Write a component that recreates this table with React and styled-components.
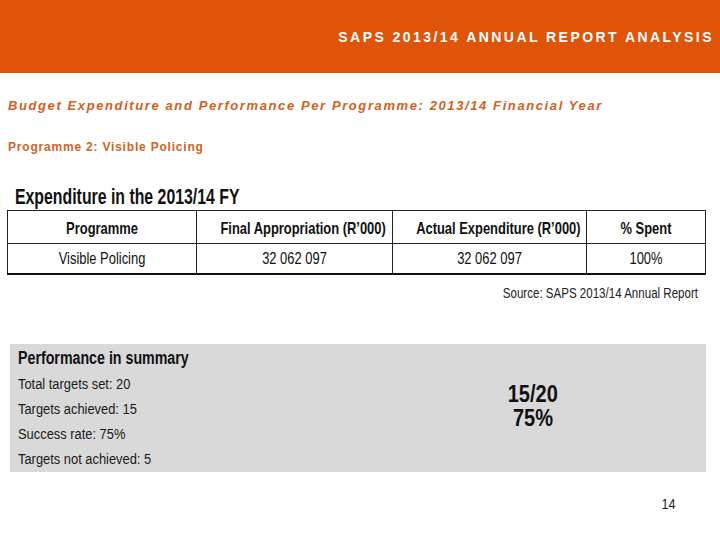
import React from "react";
import styled, { createGlobalStyle } from "styled-components";

const GlobalStyle = createGlobalStyle`
  html, body {
    margin: 0;
    padding: 0;
    background: #ffffff;
  }
  body {
    font-family: "Liberation Sans", Arial, sans-serif;
    width: 720px;
    height: 540px;
    overflow: hidden;
  }
`;

// the slide uses a condensed sans; squeeze Liberation Sans to get the same widths
const squeeze = (scale, origin) => `
  transform: scaleX(${scale});
  transform-origin: ${origin};
  white-space: nowrap;
`;

const Slide = styled.div`
  width: 720px;
  height: 540px;
  display: flex;
  flex-direction: column;
`;

const Banner = styled.header`
  height: 73px;
  background: #df5408;
  display: flex;
  justify-content: flex-end;
  align-items: center;
  padding-right: 6px;
  box-sizing: border-box;
`;

const BannerTitle = styled.h1`
  margin: 0;
  color: #ffffff;
  font-size: 14px;
  line-height: 16px;
  font-weight: bold;
  letter-spacing: 2.45px;
`;

const Content = styled.main`
  flex: 1;
  display: flex;
  flex-direction: column;
  padding: 0 14px 0 7px;
`;

const Heading = styled.h2`
  margin: 25px 0 0 1px;
  color: #d2601f;
  font-size: 13px;
  line-height: 16px;
  font-style: italic;
  font-weight: bold;
  letter-spacing: 1.6px;
`;

const SubHeading = styled.h3`
  margin: 26px 0 0 1px;
  color: #cf6428;
  font-size: 12px;
  line-height: 14px;
  font-weight: bold;
  letter-spacing: 0.8px;
`;

const TableTitle = styled.div`
  margin: 30px 0 0 8px;
  font-size: 22px;
  line-height: 26px;
  font-weight: bold;
  color: #111;
  ${squeeze(0.72, "left")}
`;

const Table = styled.table`
  width: 698px;
  table-layout: fixed;
  border-collapse: collapse;
  color: #111;
  border-bottom: 2px solid #111;
`;

const Th = styled.th`
  height: 29px;
  border: 1px solid #222;
  font-size: 17px;
  font-weight: bold;
  padding: 3px 0 0;
  width: ${(p) => p.$w};
`;

const Td = styled.td`
  height: 28px;
  border: 1px solid #222;
  font-size: 17px;
  font-weight: normal;
  padding: 1px 0 0;
`;

const CellText = styled.div`
  text-align: center;
  ${squeeze(0.76, "center")}
`;

const Source = styled.div`
  margin: 9px 8px 0 0;
  font-size: 15px;
  line-height: 18px;
  color: #222;
  text-align: right;
  ${squeeze(0.77, "right")}
`;

const Summary = styled.section`
  margin: 42px 0 0 3px;
  width: 696px;
  height: 128px;
  background: #d9d9d9;
  display: flex;
`;

const SummaryList = styled.div`
  width: 420px;
  padding: 3px 0 0 8px;
  display: flex;
  flex-direction: column;
  color: #111;
`;

const SummaryTitle = styled.div`
  font-size: 18px;
  line-height: 22px;
  font-weight: bold;
  ${squeeze(0.79, "left")}
`;

const SummaryLine = styled.div`
  font-size: 14px;
  line-height: 25px;
  margin-top: ${(p) => (p.$first ? "3px" : "0")};
  color: #1a1a1a;
  ${squeeze(0.92, "left")}
`;

const Score = styled.div`
  flex: 1;
  display: flex;
  flex-direction: column;
  align-items: center;
  padding: 38px 78px 0 0;
  font-size: 23px;
  line-height: 24px;
  font-weight: bold;
  color: #111;
`;

const ScoreValue = styled.div`
  ${squeeze(0.87, "center")}
`;

const PageNumber = styled.div`
  align-self: flex-end;
  margin: 24px 30px 0 0;
  font-size: 14px;
  line-height: 16px;
  color: #222;
  ${squeeze(0.9, "right")}
`;

const columns = [
  { label: "Programme", w: "188px" },
  { label: "Final Appropriation (R\u2019000)", w: "195px" },
  { label: "Actual Expenditure (R\u2019000)", w: "193px" },
  { label: "% Spent", w: "118px" },
];

const row = ["Visible Policing", "32 062 097", "32 062 097", "100%"];

const summary = [
  "Total targets set: 20",
  "Targets achieved: 15",
  "Success rate: 75%",
  "Targets not achieved: 5",
];

export default function App() {
  return (
    <>
      <GlobalStyle />
      <Slide>
        <Banner>
          <BannerTitle>SAPS 2013/14 ANNUAL REPORT ANALYSIS</BannerTitle>
        </Banner>
        <Content>
          <Heading>
            Budget Expenditure and Performance Per Programme: 2013/14 Financial Year
          </Heading>
          <SubHeading>Programme 2: Visible Policing</SubHeading>
          <TableTitle>Expenditure in the 2013/14 FY</TableTitle>
          <Table>
            <thead>
              <tr>
                {columns.map((c) => (
                  <Th key={c.label} $w={c.w}>
                    <CellText>{c.label}</CellText>
                  </Th>
                ))}
              </tr>
            </thead>
            <tbody>
              <tr>
                {row.map((v, i) => (
                  <Td key={i}>
                    <CellText>{v}</CellText>
                  </Td>
                ))}
              </tr>
            </tbody>
          </Table>
          <Source>Source: SAPS 2013/14 Annual Report</Source>
          <Summary>
            <SummaryList>
              <SummaryTitle>Performance in summary</SummaryTitle>
              {summary.map((s, i) => (
                <SummaryLine key={s} $first={i === 0}>
                  {s}
                </SummaryLine>
              ))}
            </SummaryList>
            <Score>
              <ScoreValue>15/20</ScoreValue>
              <ScoreValue>75%</ScoreValue>
            </Score>
          </Summary>
          <PageNumber>14</PageNumber>
        </Content>
      </Slide>
    </>
  );
}
